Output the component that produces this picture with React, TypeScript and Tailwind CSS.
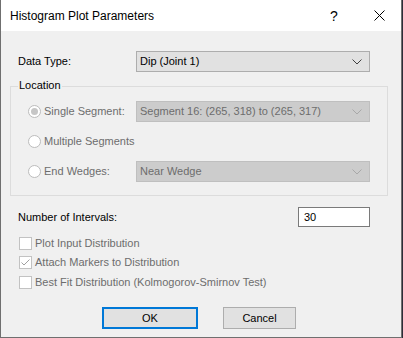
import React from "react";

const Chevron = ({ disabled }: { disabled?: boolean }) => (
  <svg width="10" height="6" viewBox="0 0 10 6" className="shrink-0">
    <path d="M0.5 0.5 L5 5 L9.5 0.5" fill="none" stroke={disabled ? "#a8a8a8" : "#404040"} strokeWidth="1" />
  </svg>
);

const Select = ({ text, disabled, w }: { text: string; disabled?: boolean; w: string }) => (
  <div
    className={`${w} h-[21px] flex items-center justify-between pl-[3px] pr-[7px] border ${
      disabled ? "bg-[#cccccc] border-[#bfbfbf] text-[#6d6d6d]" : "bg-[#e1e1e1] border-[#adadad] text-black"
    }`}
  >
    <span>{text}</span>
    <Chevron disabled={disabled} />
  </div>
);

const Radio = ({ checked, label }: { checked?: boolean; label: string }) => (
  <div className="flex items-center gap-[3px] text-[#6d6d6d]">
    <div className="w-[13px] h-[13px] rounded-full border border-[#bcbcbc] bg-white flex items-center justify-center">
      {checked && <div className="w-[7px] h-[7px] rounded-full bg-[#c6c6c6]" />}
    </div>
    <span>{label}</span>
  </div>
);

const Check = ({ checked, label }: { checked?: boolean; label: string }) => (
  <div className="flex items-center gap-[3px] text-[#6d6d6d]">
    <div className="w-[13px] h-[13px] border border-[#c2c2c2] bg-white flex items-center justify-center">
      {checked && (
        <svg width="11" height="11" viewBox="0 0 11 11">
          <path d="M1.5 5.5 L4 8 L9.5 2.5" fill="none" stroke="#a0a0a0" strokeWidth="1" />
        </svg>
      )}
    </div>
    <span>{label}</span>
  </div>
);

export default function App() {
  return (
    <div className="w-[403px] h-[338px] bg-[#2c2c38] text-[11px] leading-none" style={{ fontFamily: "'Liberation Sans', Arial, sans-serif" }}>
      <div className="w-[402px] h-[338px] border-l border-r border-b border-[#6f6f6f] bg-[#f0f0f0] flex flex-col">
        {/* title bar */}
        <div className="h-[31px] bg-white flex items-center pl-[9px] shrink-0">
          <span className="text-[12px] text-black flex-1">Histogram Plot Parameters</span>
          <span className="text-[14px] text-black w-[10px] mr-[34px]">?</span>
          <svg width="11" height="11" viewBox="0 0 11 11" className="mr-[16px]">
            <path d="M0.5 0.5 L10.5 10.5 M10.5 0.5 L0.5 10.5" stroke="#000" strokeWidth="1" />
          </svg>
        </div>

        {/* data type */}
        <div className="mt-[20px] flex items-center h-[21px] pl-[17px]">
          <span className="w-[118px] text-black">Data Type:</span>
          <Select text="Dip (Joint 1)" w="w-[234px]" />
        </div>

        {/* location group */}
        <div className="relative mt-[14px] ml-[9px] w-[378px] h-[110px] border border-[#dcdcdc] pt-[14px] pl-[17px] flex flex-col gap-[9px]">
          <span className="absolute -top-[7px] left-[7px] px-[1px] bg-[#f0f0f0] text-black">Location</span>
          <div className="flex items-center h-[21px]">
            <div className="w-[108px]">
              <Radio checked label="Single Segment:" />
            </div>
            <Select disabled text="Segment 16: (265, 318) to (265, 317)" w="w-[234px]" />
          </div>
          <div className="flex items-center h-[21px]">
            <Radio label="Multiple Segments" />
          </div>
          <div className="flex items-center h-[21px]">
            <div className="w-[108px]">
              <Radio label="End Wedges:" />
            </div>
            <Select disabled text="Near Wedge" w="w-[234px]" />
          </div>
        </div>

        {/* intervals */}
        <div className="mt-[11px] flex items-center h-[20px] pl-[17px]">
          <span className="w-[280px] text-black">Number of Intervals:</span>
          <div className="w-[72px] h-[20px] bg-white border border-[#7a7a7a] flex items-center pl-[5px] text-black">30</div>
        </div>

        {/* checkboxes */}
        <div className="mt-[7px] pl-[18px] flex flex-col">
          <div className="h-[19px] flex items-center">
            <Check label="Plot Input Distribution" />
          </div>
          <div className="h-[19px] flex items-center">
            <Check checked label="Attach Markers to Distribution" />
          </div>
          <div className="h-[20px] flex items-center">
            <Check label="Best Fit Distribution (Kolmogorov-Smirnov Test)" />
          </div>
        </div>

        {/* buttons */}
        <div className="mt-[15px] flex pl-[101px] gap-[25px]">
          <div className="w-[96px] h-[22px] bg-[#e1e1e1] border-2 border-[#0078d7] flex items-center justify-center text-black">OK</div>
          <div className="w-[73px] h-[22px] bg-[#e1e1e1] border border-[#adadad] flex items-center justify-center text-black">Cancel</div>
        </div>
      </div>
    </div>
  );
}
